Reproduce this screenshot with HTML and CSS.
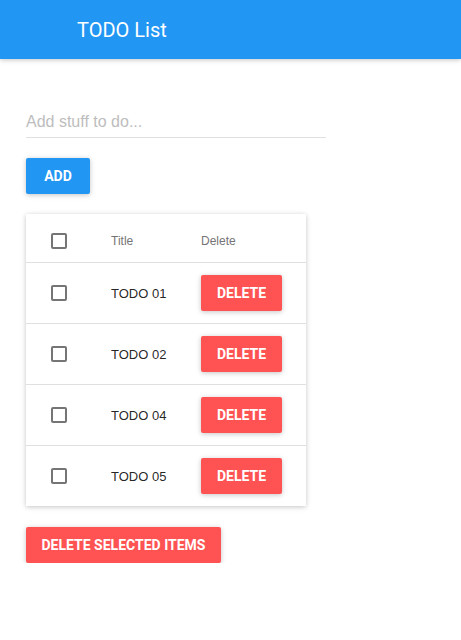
FILE: index.html
```html
<!DOCTYPE html>
<html>
<head>
<meta charset="utf-8">
<link rel="stylesheet" href="styles.css">
</head>
<body>
<header class="appbar"><h1 class="appbar-title">TODO List</h1></header>
<main class="content">
  <input class="todo-input" type="text" placeholder="Add stuff to do...">
  <button class="btn btn-primary btn-add">ADD</button>
  <div class="card">
    <div class="row row-head">
      <span class="cell"><span class="checkbox"></span></span>
      <span class="cell">Title</span>
      <span class="cell">Delete</span>
    </div>
    <div class="row">
      <span class="cell"><span class="checkbox"></span></span>
      <span class="cell">TODO 01</span>
      <span class="cell"><button class="btn btn-danger btn-delete">DELETE</button></span>
    </div>
    <div class="row">
      <span class="cell"><span class="checkbox"></span></span>
      <span class="cell">TODO 02</span>
      <span class="cell"><button class="btn btn-danger btn-delete">DELETE</button></span>
    </div>
    <div class="row">
      <span class="cell"><span class="checkbox"></span></span>
      <span class="cell">TODO 04</span>
      <span class="cell"><button class="btn btn-danger btn-delete">DELETE</button></span>
    </div>
    <div class="row">
      <span class="cell"><span class="checkbox"></span></span>
      <span class="cell">TODO 05</span>
      <span class="cell"><button class="btn btn-danger btn-delete">DELETE</button></span>
    </div>
  </div>
  <button class="btn btn-danger btn-delete-selected">DELETE SELECTED ITEMS</button>
</main>
</body>
</html>
```
FILE: styles.css
```css
* { box-sizing: border-box; }
body {
  margin: 0;
  font-family: "Liberation Sans", Arial, sans-serif;
  background: #fff;
  color: rgba(0,0,0,0.87);
}
.appbar {
  height: 59px;
  background: #2196f3;
  box-shadow: 0 1px 6px rgba(0,0,0,0.12), 0 1px 4px rgba(0,0,0,0.12);
  display: flex;
  align-items: center;
  padding-left: 77px;
}
.appbar-title {
  margin: 0;
  font-family: Roboto, "Liberation Sans", sans-serif;
  font-size: 20px;
  font-weight: 400;
  color: #fff;
}
.content {
  padding: 0 26px;
  display: flex;
  flex-direction: column;
  align-items: flex-start;
}
.todo-input {
  margin-top: 47px;
  width: 300px;
  height: 32px;
  border: none;
  border-bottom: 1px solid #e0e0e0;
  padding: 0;
  font-family: "Liberation Sans", Arial, sans-serif;
  font-size: 16px;
  outline: none;
  color: rgba(0,0,0,0.87);
}
.todo-input::placeholder { color: #bdbdbd; }
.btn {
  border: none;
  border-radius: 2px;
  height: 36px;
  font-family: Roboto, "Liberation Sans", sans-serif;
  font-size: 14px;
  font-weight: 700;
  color: #fff;
  padding: 0;
  white-space: nowrap;
  text-align: center;
  box-shadow: 0 1px 6px rgba(0,0,0,0.12), 0 1px 4px rgba(0,0,0,0.12);
}
.btn-primary { background: #2196f3; }
.btn-danger { background: #ff5252; }
.btn-add { margin-top: 20px; width: 64px; }
.btn-delete { width: 81px; }
.btn-delete-selected { margin-top: 21px; width: 195px; }
.card {
  margin-top: 20px;
  width: 280px;
  background: #fff;
  box-shadow: 0 1px 6px rgba(0,0,0,0.12), 0 1px 4px rgba(0,0,0,0.12);
}
.row {
  display: grid;
  grid-template-columns: 85px 90px 1fr;
  align-items: center;
  height: 61px;
  border-top: 1px solid #e0e0e0;
  font-size: 13px;
}
.row-head {
  height: 48px;
  padding-top: 6px;
  border-top: none;
  font-size: 12px;
  color: #757575;
}
.cell { display: flex; align-items: center; }
.cell:first-child { padding-left: 25px; }
.checkbox {
  width: 16px;
  height: 16px;
  border: 2px solid #757575;
  border-radius: 2px;
}
```
